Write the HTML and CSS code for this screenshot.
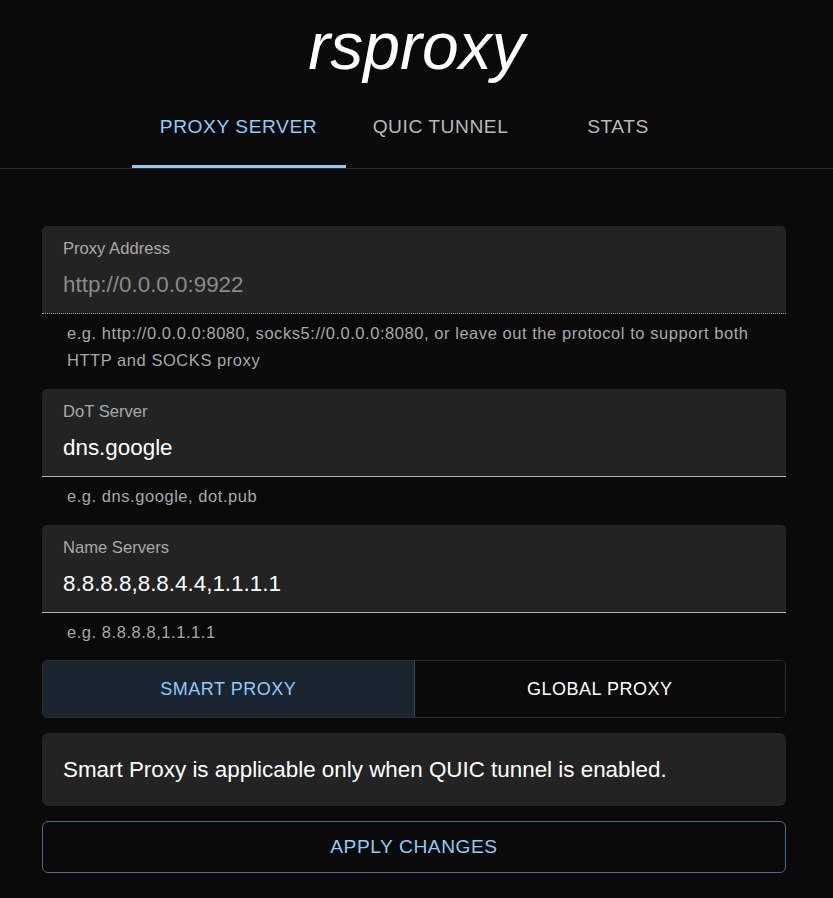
FILE: index.html
```html
<!DOCTYPE html>
<html lang="en">
<head>
<meta charset="utf-8">
<title>rsproxy</title>
<link rel="stylesheet" href="styles.css">
</head>
<body>
<header class="header">
  <h1 class="title">rsproxy</h1>
  <nav class="tabs">
    <div class="tab tab-active tab-proxy">PROXY SERVER</div>
    <div class="tab tab-quic">QUIC TUNNEL</div>
    <div class="tab tab-stats">STATS</div>
  </nav>
</header>
<main class="content">
  <div class="group">
    <div class="field field-disabled">
      <div class="label">Proxy Address</div>
      <div class="value">http://0.0.0.0:9922</div>
    </div>
    <div class="helper">e.g. http://0.0.0.0:8080, socks5://0.0.0.0:8080, or leave out the protocol to support both HTTP and SOCKS proxy</div>
  </div>
  <div class="group">
    <div class="field">
      <div class="label">DoT Server</div>
      <div class="value">dns.google</div>
    </div>
    <div class="helper">e.g. dns.google, dot.pub</div>
  </div>
  <div class="group">
    <div class="field">
      <div class="label">Name Servers</div>
      <div class="value">8.8.8.8,8.8.4.4,1.1.1.1</div>
    </div>
    <div class="helper">e.g. 8.8.8.8,1.1.1.1</div>
  </div>
  <div class="toggle">
    <div class="toggle-btn toggle-selected">SMART PROXY</div>
    <div class="toggle-btn">GLOBAL PROXY</div>
  </div>
  <div class="alert">Smart Proxy is applicable only when QUIC tunnel is enabled.</div>
  <div class="apply">APPLY CHANGES</div>
</main>
</body>
</html>
```
FILE: styles.css
```css
html, body {
  margin: 0;
  padding: 0;
  background: #0a0a0a;
  color: #ffffff;
  font-family: "Liberation Sans", Arial, Helvetica, sans-serif;
}

.header {
  display: flex;
  flex-direction: column;
  align-items: center;
  border-bottom: 1px solid #2c2c2c;
}

.title {
  margin: 6px 0 0 0;
  font-size: 66px;
  line-height: 80px;
  font-style: italic;
  font-weight: 400;
  color: #ffffff;
}

.tabs {
  display: flex;
  height: 82px;
  margin-left: -1px;
}

.tab {
  display: flex;
  align-items: center;
  justify-content: center;
  box-sizing: border-box;
  padding-top: 2px;
  border-bottom: 3px solid transparent;
  font-size: 19.2px;
  letter-spacing: 0.02857em;
  color: #b9b9b9;
}

.tab-proxy { width: 214px; }
.tab-quic { width: 190px; }
.tab-stats { width: 165px; }

.tab-active {
  color: #90caf9;
  border-bottom-color: #90caf9;
}

.content {
  display: flex;
  flex-direction: column;
  padding: 57px 47px 0 42px;
}

.group {
  display: flex;
  flex-direction: column;
  margin-bottom: 15px;
}

.group:nth-child(3) {
  margin-bottom: 14px;
}

.field {
  box-sizing: border-box;
  height: 88px;
  background: #232323;
  border-radius: 5px 5px 0 0;
  border-bottom: 1px solid #b8b8b8;
  padding: 13px 21px 0 21px;
}

.field-disabled {
  border-bottom: 1px dotted #9a9a9a;
}

.label {
  font-size: 16.6px;
  line-height: 20px;
  color: #a9a9a9;
}

.value {
  margin-top: 14px;
  font-size: 22.4px;
  line-height: 24px;
  color: #ffffff;
}

.field-disabled .value {
  color: #8a8a8a;
}

.helper {
  margin: 6px 14px 0 25px;
  font-size: 16.5px;
  line-height: 27px;
  letter-spacing: 0.03333em;
  color: #a8a8a8;
}

.toggle {
  display: flex;
  height: 58px;
  box-sizing: border-box;
  border: 1px solid #2b2b2b;
  border-radius: 5px;
  overflow: hidden;
  margin-bottom: 15px;
}

.toggle-btn {
  flex: 1;
  display: flex;
  align-items: center;
  justify-content: center;
  font-size: 18px;
  letter-spacing: 0.02857em;
  color: #ffffff;
  background: #0a0a0a;
}

.toggle-selected {
  background: #1b2530;
  color: #90caf9;
  border-right: 1px solid #3a4652;
}

.alert {
  box-sizing: border-box;
  height: 73px;
  display: flex;
  align-items: center;
  padding: 0 21px;
  background: #232323;
  border-radius: 6px;
  font-size: 22.4px;
  color: #ffffff;
  margin-bottom: 15px;
}

.apply {
  box-sizing: border-box;
  height: 52px;
  display: flex;
  align-items: center;
  justify-content: center;
  border: 1px solid #4c6a84;
  border-radius: 6px;
  font-size: 19.2px;
  letter-spacing: 0.02857em;
  color: #90caf9;
}
```
